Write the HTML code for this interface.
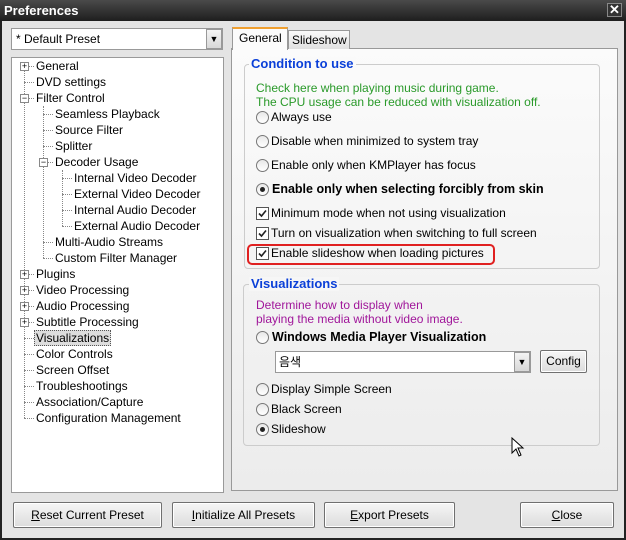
<!DOCTYPE html>
<html><head><meta charset="utf-8"><style>
*{box-sizing:border-box;margin:0;padding:0}
body{width:626px;height:540px;overflow:hidden;background:#222;font-family:"Liberation Sans","Noto Sans CJK KR",sans-serif;font-size:12px;color:#000;position:relative}
.a{position:absolute}
#title{left:0;top:0;width:626px;height:21px;background:linear-gradient(#4a4a4a,#1e1e1e);color:#fff;font-weight:bold;font-size:13px;line-height:21px;padding-left:4px}
#body{left:2px;top:21px;width:622px;height:517px;background:#e4e4e4}
.t{position:absolute;white-space:nowrap;line-height:16px}
.btn{position:absolute;height:26px;border:1px solid #707070;border-radius:2px;background:linear-gradient(#f6f6f6,#dcdcdc);text-align:center;line-height:24px;box-shadow:inset 0 0 0 1px #fff}
.vl{position:absolute;border-left:1px dotted #888;width:0}
.hl{position:absolute;border-top:1px dotted #888;height:0}
.box{position:absolute;width:9px;height:9px;border:1px solid #888;background:#fff;font-size:9px;line-height:7px;text-align:center}
.grp{position:absolute;border:1px solid #ccc;border-radius:4px}
.gt{position:absolute;background:#f4f4f4;color:#0a3fd8;font-weight:bold;font-size:13px;padding:0 2px;line-height:14px}
.rad{position:absolute;width:13px;height:13px;border:1px solid #777;border-radius:50%;background:linear-gradient(#e8e8e8,#fff)}
.rad.on::after{content:"";position:absolute;left:3px;top:3px;width:5px;height:5px;border-radius:50%;background:#222}
.chk{position:absolute;width:13px;height:13px;border:1px solid #555;background:#fff}
.chk svg{position:absolute;left:1px;top:1px}
</style></head><body>
<div id="title" class="a">Preferences</div>
<div class="a" style="left:607px;top:3px;width:15px;height:14px;background:#333;border:1px solid #888;color:#fff;font-weight:bold;font-size:13px;line-height:12px;text-align:center">✕</div>
<div id="body" class="a"></div>

<!-- combo -->
<div class="a" style="left:11px;top:28px;width:212px;height:22px;background:#fff;border:1px solid #999"></div>
<div class="t" style="left:16px;top:31px">* Default Preset</div>
<div class="a" style="left:206px;top:29px;width:16px;height:20px;background:linear-gradient(#f4f4f4,#d8d8d8);border:1px solid #999;font-size:9px;text-align:center;line-height:18px">&#9660;</div>

<!-- tree -->
<div class="a" style="left:11px;top:57px;width:213px;height:436px;background:#fff;border:1px solid #999"></div>
<div class="vl" style="left:24px;top:66px;height:352px"></div>
<div class="vl" style="left:43px;top:106px;height:152px"></div>
<div class="vl" style="left:62px;top:170px;height:56px"></div>
<!-- horizontal connectors -->
<div class="hl" style="left:24px;top:66px;width:10px"></div>
<div class="hl" style="left:24px;top:82px;width:10px"></div>
<div class="hl" style="left:24px;top:98px;width:10px"></div>
<div class="hl" style="left:43px;top:114px;width:10px"></div>
<div class="hl" style="left:43px;top:130px;width:10px"></div>
<div class="hl" style="left:43px;top:146px;width:10px"></div>
<div class="hl" style="left:43px;top:162px;width:10px"></div>
<div class="hl" style="left:62px;top:178px;width:10px"></div>
<div class="hl" style="left:62px;top:194px;width:10px"></div>
<div class="hl" style="left:62px;top:210px;width:10px"></div>
<div class="hl" style="left:62px;top:226px;width:10px"></div>
<div class="hl" style="left:43px;top:242px;width:10px"></div>
<div class="hl" style="left:43px;top:258px;width:10px"></div>
<div class="hl" style="left:24px;top:274px;width:10px"></div>
<div class="hl" style="left:24px;top:290px;width:10px"></div>
<div class="hl" style="left:24px;top:306px;width:10px"></div>
<div class="hl" style="left:24px;top:322px;width:10px"></div>
<div class="hl" style="left:24px;top:338px;width:10px"></div>
<div class="hl" style="left:24px;top:354px;width:10px"></div>
<div class="hl" style="left:24px;top:370px;width:10px"></div>
<div class="hl" style="left:24px;top:386px;width:10px"></div>
<div class="hl" style="left:24px;top:402px;width:10px"></div>
<div class="hl" style="left:24px;top:418px;width:10px"></div>
<div class="box" style="left:20px;top:62px">+</div>
<div class="box" style="left:20px;top:94px">−</div>
<div class="box" style="left:39px;top:158px">−</div>
<div class="box" style="left:20px;top:270px">+</div>
<div class="box" style="left:20px;top:286px">+</div>
<div class="box" style="left:20px;top:302px">+</div>
<div class="box" style="left:20px;top:318px">+</div>
<div class="t" style="left:36px;top:58px">General</div>
<div class="t" style="left:36px;top:74px">DVD settings</div>
<div class="t" style="left:36px;top:90px">Filter Control</div>
<div class="t" style="left:55px;top:106px">Seamless Playback</div>
<div class="t" style="left:55px;top:122px">Source Filter</div>
<div class="t" style="left:55px;top:138px">Splitter</div>
<div class="t" style="left:55px;top:154px">Decoder Usage</div>
<div class="t" style="left:74px;top:170px">Internal Video Decoder</div>
<div class="t" style="left:74px;top:186px">External Video Decoder</div>
<div class="t" style="left:74px;top:202px">Internal Audio Decoder</div>
<div class="t" style="left:74px;top:218px">External Audio Decoder</div>
<div class="t" style="left:55px;top:234px">Multi-Audio Streams</div>
<div class="t" style="left:55px;top:250px">Custom Filter Manager</div>
<div class="t" style="left:36px;top:266px">Plugins</div>
<div class="t" style="left:36px;top:282px">Video Processing</div>
<div class="t" style="left:36px;top:298px">Audio Processing</div>
<div class="t" style="left:36px;top:314px">Subtitle Processing</div>
<div class="t" style="left:34px;top:330px;background:#ddd;border:1px dotted #555;padding:0 1px;line-height:14px">Visualizations</div>
<div class="t" style="left:36px;top:346px">Color Controls</div>
<div class="t" style="left:36px;top:362px">Screen Offset</div>
<div class="t" style="left:36px;top:378px">Troubleshootings</div>
<div class="t" style="left:36px;top:394px">Association/Capture</div>
<div class="t" style="left:36px;top:410px">Configuration Management</div>

<!-- tabs panel -->
<div class="a" style="left:231px;top:48px;width:387px;height:443px;background:linear-gradient(#fbfbfb,#ececec);border:1px solid #999"></div>
<div class="a" style="left:288px;top:30px;width:62px;height:19px;background:linear-gradient(#fafafa,#e0e0e0);border:1px solid #999;border-bottom:none"></div>
<div class="t" style="left:292px;top:32px">Slideshow</div>
<div class="a" style="left:232px;top:27px;width:56px;height:23px;background:#fbfbfb;border:1px solid #999;border-top:2px solid #f0a030;border-bottom:none"></div>
<div class="t" style="left:239px;top:30px">General</div>

<!-- group 1 -->
<div class="grp" style="left:244px;top:64px;width:356px;height:205px"></div>
<div class="gt" style="left:249px;top:57px;background:#fafafa">Condition to use</div>
<div class="t" style="left:256px;top:80px;color:#2a9a2a">Check here when playing music during game.</div>
<div class="t" style="left:256px;top:94px;color:#2a9a2a">The CPU usage can be reduced with visualization off.</div>
<div class="rad" style="left:256px;top:111px"></div><div class="t" style="left:271px;top:109px">Always use</div>
<div class="rad" style="left:256px;top:135px"></div><div class="t" style="left:271px;top:133px">Disable when minimized to system tray</div>
<div class="rad" style="left:256px;top:159px"></div><div class="t" style="left:271px;top:157px">Enable only when KMPlayer has focus</div>
<div class="rad on" style="left:256px;top:183px"></div><div class="t" style="left:272px;top:181px;font-weight:bold;font-size:12.5px">Enable only when selecting forcibly from skin</div>
<div class="chk" style="left:256px;top:207px"><svg width="9" height="9"><path d="M1 4.5 L3.5 7 L8 1.5" stroke="#222" stroke-width="1.6" fill="none"/></svg></div><div class="t" style="left:271px;top:205px">Minimum mode when not using visualization</div>
<div class="chk" style="left:256px;top:227px"><svg width="9" height="9"><path d="M1 4.5 L3.5 7 L8 1.5" stroke="#222" stroke-width="1.6" fill="none"/></svg></div><div class="t" style="left:271px;top:225px">Turn on visualization when switching to full screen</div>
<div class="a" style="left:247px;top:244px;width:248px;height:21px;border:2px solid #e02020;border-radius:5px"></div>
<div class="chk" style="left:256px;top:247px"><svg width="9" height="9"><path d="M1 4.5 L3.5 7 L8 1.5" stroke="#222" stroke-width="1.6" fill="none"/></svg></div><div class="t" style="left:271px;top:245px">Enable slideshow when loading pictures</div>

<!-- group 2 -->
<div class="grp" style="left:243px;top:284px;width:357px;height:162px"></div>
<div class="gt" style="left:249px;top:277px;background:#f6f6f6">Visualizations</div>
<div class="t" style="left:256px;top:297px;color:#a0169a">Determine how to display when</div>
<div class="t" style="left:256px;top:311px;color:#a0169a">playing the media without video image.</div>
<div class="rad" style="left:256px;top:331px"></div><div class="t" style="left:272px;top:329px;font-weight:bold;font-size:12.5px">Windows Media Player Visualization</div>
<div class="a" style="left:275px;top:351px;width:256px;height:22px;background:#fff;border:1px solid #999"></div>
<div class="t" style="left:279px;top:354px">음색</div>
<div class="a" style="left:514px;top:352px;width:16px;height:20px;background:linear-gradient(#f4f4f4,#d8d8d8);border:1px solid #999;font-size:9px;text-align:center;line-height:18px">&#9660;</div>
<div class="btn" style="left:540px;top:350px;width:47px;height:23px;line-height:21px">Config</div>
<div class="rad" style="left:256px;top:383px"></div><div class="t" style="left:271px;top:381px">Display Simple Screen</div>
<div class="rad" style="left:256px;top:403px"></div><div class="t" style="left:271px;top:401px">Black Screen</div>
<div class="rad on" style="left:256px;top:423px"></div><div class="t" style="left:271px;top:421px">Slideshow</div>
<svg class="a" style="left:511px;top:437px" width="14" height="22"><path d="M1 1 L1 16 L5 12 L8 19 L10 18 L7 11 L12 11 Z" fill="#fff" stroke="#000" stroke-width="1"/></svg>

<!-- buttons -->
<div class="btn" style="left:13px;top:502px;width:149px"><u>R</u>eset Current Preset</div>
<div class="btn" style="left:172px;top:502px;width:143px"><u>I</u>nitialize All Presets</div>
<div class="btn" style="left:324px;top:502px;width:131px"><u>E</u>xport Presets</div>
<div class="btn" style="left:520px;top:502px;width:94px"><u>C</u>lose</div>
</body></html>
